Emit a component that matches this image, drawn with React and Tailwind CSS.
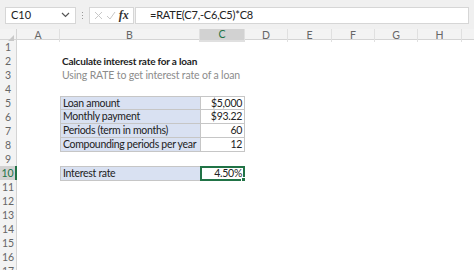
import React from 'react';

const cols = ['A', 'B', 'C', 'D', 'E', 'F', 'G', 'H', ''];

const rows = [
    { n: 1 },
    { n: 2, title: 'Calculate interest rate for a loan' },
    { n: 3, sub: 'Using RATE to get interest rate of a loan' },
    { n: 4 },
    { n: 5, label: 'Loan amount', value: '$5,000', top: true },
    { n: 6, label: 'Monthly payment', value: '$93.22' },
    { n: 7, label: 'Periods (term in months)', value: '60' },
    { n: 8, label: 'Compounding periods per year', value: '12' },
    { n: 9 },
    { n: 10, label: 'Interest rate', value: '4.50%', top: true, active: true },
    { n: 11 }, { n: 12 }, { n: 13 }, { n: 14 }, { n: 15 }, { n: 16 }, { n: 17 },
];

const grid = 'grid grid-cols-[17px_43px_140px_45px_43px_44px_43px_43px_44px_1fr]';
const cellText = 'text-[10.5px] tracking-[-0.3px] text-[#222] leading-none whitespace-nowrap';

const Row = ({ row }) => {
    const hasTable = row.label !== undefined;
    return (
        <div className={`${grid} h-[14px]`}>
            <div className={`flex items-center justify-center text-[10.5px] leading-none ${row.active ? 'border-r-2 border-r-[#217346] text-[#217346] bg-[#d2d2d2]' : 'border-r border-r-[#d4d4d4] text-[#666] bg-[#f3f3f3]'}`}>
                {row.n}
            </div>
            <div />
            {hasTable ? (
                <>
                    <div className={`bg-[#d9e1f2] border-b border-l border-[#c6c6c6] ${row.top ? 'border-t' : ''} flex items-center pl-[2px] overflow-hidden ${cellText}`}>
                        {row.label}
                    </div>
                    {row.active ? (
                        <div className={`relative border-2 border-[#217346] flex items-center justify-end pr-[1px] bg-white ${cellText}`}>
                            {row.value}
                            <div className="absolute -right-[3px] -bottom-[3px] w-[5px] h-[5px] bg-[#217346] border border-white" />
                        </div>
                    ) : (
                        <div className={`border-b border-l border-r border-[#c6c6c6] ${row.top ? 'border-t' : ''} flex items-center justify-end pr-[2px] ${cellText}`}>
                            {row.value}
                        </div>
                    )}
                </>
            ) : (
                <div className="col-span-2 flex items-center pl-[2px] whitespace-nowrap leading-none">
                    {row.title && <span className="text-[10px] tracking-[-0.2px] font-bold text-[#222]">{row.title}</span>}
                    {row.sub && <span className="text-[10.5px] tracking-[-0.15px] text-[#8c8c8c]">{row.sub}</span>}
                </div>
            )}
        </div>
    );
};

export default function App() {
    return (
        <div className="w-[474px] h-[270px] overflow-hidden bg-white" style={{ fontFamily: 'Lato, "Liberation Sans", sans-serif' }}>
            <div className="h-[29px] bg-[#f0f0f0] flex items-center px-[5px] pt-[1px]">
                <div className="w-[71px] h-[17px] bg-white border border-[#d6d6d6] flex items-center justify-between px-[5px] text-[11px] text-[#222]">
                    <span>C10</span>
                    <svg width="9" height="6" viewBox="0 0 9 6"><path d="M1 1l3.5 3.5L8 1" stroke="#555" strokeWidth="1.2" fill="none" /></svg>
                </div>
                <div className="w-[13px] flex flex-col items-center gap-[2px]">
                    <span className="w-[1px] h-[1px] bg-[#999]" />
                    <span className="w-[1px] h-[1px] bg-[#999]" />
                    <span className="w-[1px] h-[1px] bg-[#999]" />
                </div>
                <div className="w-[45px] h-[17px] bg-white border border-[#d6d6d6] flex items-center justify-around px-[3px]">
                    <svg width="9" height="9" viewBox="0 0 9 9"><path d="M1 1l7 7M8 1L1 8" stroke="#c8c8c8" strokeWidth="1" /></svg>
                    <svg width="10" height="9" viewBox="0 0 10 9"><path d="M1 5l3 3 5-7" stroke="#c8c8c8" strokeWidth="1" fill="none" /></svg>
                    <span className="text-[12px] italic font-semibold text-[#333] leading-none" style={{ fontFamily: '"Liberation Serif", serif' }}>fx</span>
                </div>
                <div className="flex-1 h-[17px] bg-white border border-[#d6d6d6] ml-[1px] flex items-center pl-[14px] text-[11px] tracking-[-0.2px] text-[#222]">
                    =RATE(C7,-C6,C5)*C8
                </div>
            </div>
            <div className={`${grid} h-[11px] bg-[#f3f3f3] border-b border-[#d4d4d4]`}>
                <div className="border-r border-[#d4d4d4] relative">
                    <svg className="absolute right-[2px] bottom-[1px]" width="6" height="6" viewBox="0 0 6 6"><path d="M6 0v6H0z" fill="#c8c8c8" /></svg>
                </div>
                {cols.map((c, i) => (
                    <div key={i} className={`flex items-center justify-center text-[10.5px] leading-none ${c === 'C' ? 'bg-[#d2d2d2] border-b-2 border-[#217346] text-[#217346]' : 'text-[#666]'} ${c ? 'border-r border-[#e0e0e0]' : ''}`}>
                        {c}
                    </div>
                ))}
            </div>
            {rows.map(r => <Row key={r.n} row={r} />)}
        </div>
    );
}
